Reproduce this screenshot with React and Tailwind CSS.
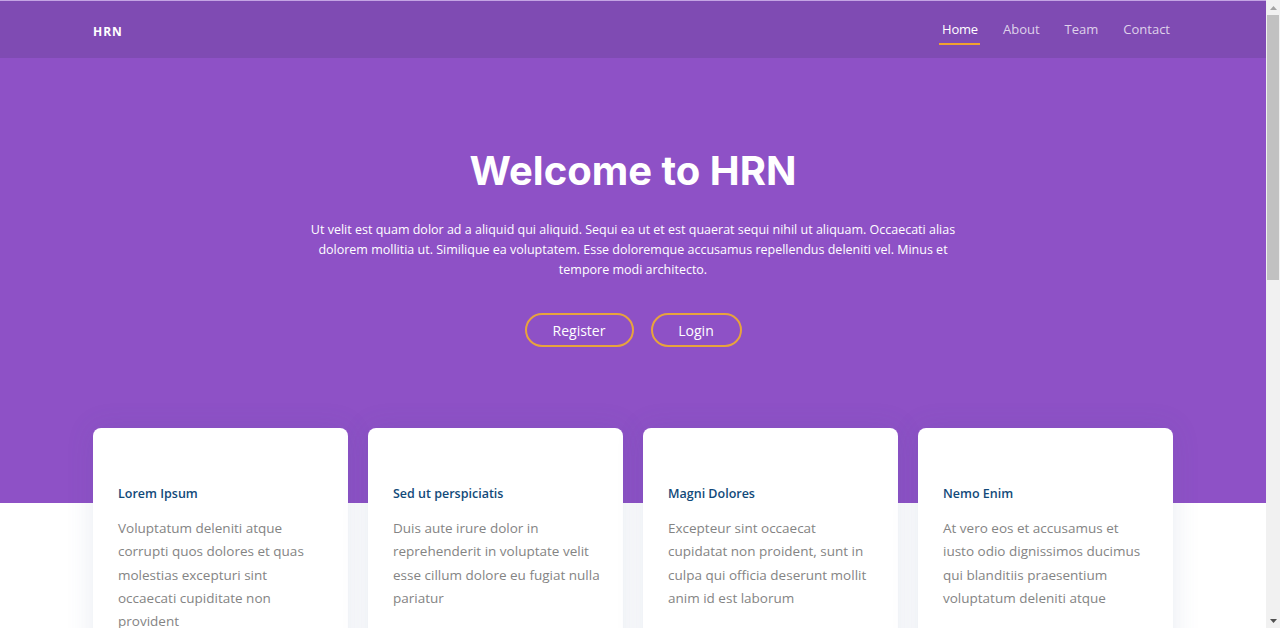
import React from 'react';

const navItems = ['Home', 'About', 'Team', 'Contact'];

const cards = [
  {
    title: 'Lorem Ipsum',
    lines: ['Voluptatum deleniti atque', 'corrupti quos dolores et quas', 'molestias excepturi sint', 'occaecati cupiditate non', 'provident'],
  },
  {
    title: 'Sed ut perspiciatis',
    lines: ['Duis aute irure dolor in', 'reprehenderit in voluptate velit', 'esse cillum dolore eu fugiat nulla', 'pariatur'],
  },
  {
    title: 'Magni Dolores',
    lines: ['Excepteur sint occaecat', 'cupidatat non proident, sunt in', 'culpa qui officia deserunt mollit', 'anim id est laborum'],
  },
  {
    title: 'Nemo Enim',
    lines: ['At vero eos et accusamus et', 'iusto odio dignissimos ducimus', 'qui blanditiis praesentium', 'voluptatum deleniti atque'],
  },
];

const App = () => {
  return (
    <div className="flex h-screen overflow-hidden bg-white font-['Open_Sans',sans-serif] text-[#444]">
      <main className="min-w-0 flex-1">
        {/* Header */}
        <header className="h-[58px] bg-[#7f4bb3] border-t border-[#c4a4e4]">
          <div className="mx-auto flex h-full w-[1080px] items-center justify-between">
            <a className="mt-[5px] text-[12px] font-bold tracking-[1px] text-white">HRN</a>
            <nav className="mt-[7px] flex items-center gap-[25px] pr-[3px]">
              {navItems.map((item, i) => (
                <a
                  key={item}
                  className={`relative pb-[6px] text-[13px] ${
                    i === 0 ? 'text-white tracking-[-0.2px]' : 'text-white/75'
                  }`}
                >
                  {item}
                  {i === 0 && (
                    <span className="absolute -left-[3px] -right-[2px] bottom-[1px] h-[2px] bg-[#f0a12f]" />
                  )}
                </a>
              ))}
            </nav>
          </div>
        </header>

        {/* Hero */}
        <section className="bg-[#8e51c6] pt-[89px] pb-[156px] text-center text-white">
          <h1 className="font-['Inter',sans-serif] text-[40px] font-bold leading-[48px]">Welcome to HRN</h1>
          <p className="mx-auto mt-[25px] w-[700px] text-[12.5px] font-medium leading-[20px]">
            Ut velit est quam dolor ad a aliquid qui aliquid. Sequi ea ut et est quaerat sequi nihil ut aliquam. Occaecati alias
            <br />
            dolorem mollitia ut. Similique ea voluptatem. Esse doloremque accusamus repellendus deleniti vel. Minus et
            <br />
            tempore modi architecto.
          </p>
          <div className="mt-[33px] flex justify-center gap-[17px]">
            <a className="flex h-[34px] w-[109px] items-center justify-center rounded-full border-2 border-[#e8a33d] text-[14px] font-medium">
              Register
            </a>
            <a className="flex h-[34px] w-[91px] items-center justify-center rounded-full border-2 border-[#e8a33d] text-[14px] font-medium">
              Login
            </a>
          </div>
        </section>

        {/* Cards */}
        <section className="relative -mt-[75px]">
          <div className="mx-auto grid w-[1080px] grid-cols-4 gap-[20px]">
            {cards.map((card) => (
              <div
                key={card.title}
                className="rounded-[8px] bg-white px-[25px] pt-[57px] pb-[40px] shadow-[0_0_29px_0_rgba(68,88,144,0.12)]"
              >
                <h4 className="text-[12.5px] font-semibold leading-[18px] text-[#124a7a]">{card.title}</h4>
                <p className="mt-[14px] whitespace-nowrap text-[13.5px] leading-[23.3px] text-[#848484]">
                  {card.lines.map((line, i) => (
                    <React.Fragment key={i}>
                      {i > 0 && <br />}
                      {line}
                    </React.Fragment>
                  ))}
                </p>
              </div>
            ))}
          </div>
        </section>
      </main>

      {/* Scrollbar */}
      <aside className="flex w-[14px] shrink-0 flex-col bg-[#f1f1f1]">
        <div className="flex h-[15px] items-center justify-center">
          <svg width="7" height="4" viewBox="0 0 7 4">
            <path d="M0 4 L3.5 0 L7 4 Z" fill="#a3a3a3" />
          </svg>
        </div>
        <div className="mx-[1px] h-[265px] bg-[#c1c1c1]" />
        <div className="flex-1" />
        <div className="flex h-[15px] items-center justify-center">
          <svg width="7" height="4" viewBox="0 0 7 4">
            <path d="M0 0 L3.5 4 L7 0 Z" fill="#505050" />
          </svg>
        </div>
      </aside>
    </div>
  );
};

export default App;
